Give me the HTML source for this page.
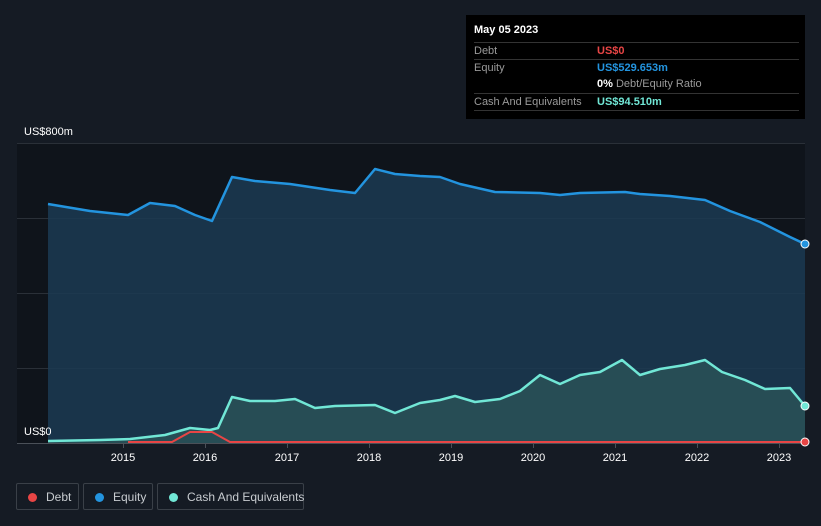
<!DOCTYPE html><html><head><style>
body{margin:0;width:821px;height:526px;background:#151b24;font-family:"Liberation Sans",sans-serif;overflow:hidden;position:relative}
.tt{position:absolute;left:466px;top:15px;width:339px;height:104px;background:#000;color:#fff;font-size:11px}
.tt .r{position:absolute;left:8px;right:6px;border-top:1px solid #333;height:17px;line-height:17px}
.tt .l{color:#9a9a9a}.tt .v{position:absolute;left:123px;font-weight:bold}
.lg{position:absolute;top:483px;height:27px;border:1px solid #3a4048;border-radius:2px;color:#c8ccd0;font-size:12px;line-height:26px;box-sizing:border-box;white-space:nowrap}
.lg i{display:inline-block;width:9px;height:9px;border-radius:50%;margin:0 9px 0 11px;vertical-align:-1px}
.ax{position:absolute;color:#fff;font-size:11px}
</style></head><body>
<div class="tt">
<div style="position:absolute;left:8px;top:9px;font-weight:bold">May 05 2023</div>
<div class="r" style="top:27px"><span class="l">Debt</span><span class="v" style="color:#e84545">US$0</span></div>
<div class="r" style="top:44px"><span class="l">Equity</span><span class="v" style="color:#2394df">US$529.653m</span></div>
<div class="r" style="top:61px;border-top:none"><span class="v" style="color:#fff">0% <span style="color:#9a9a9a;font-weight:normal">Debt/Equity Ratio</span></span></div>
<div class="r" style="top:78px"><span class="l">Cash And Equivalents</span><span class="v" style="color:#71e7d6">US$94.510m</span></div>
<div class="r" style="top:95px;height:0"></div>
</div>
<div class="ax" style="left:24px;top:126px">US$800m</div>
<svg width="821" height="526" style="position:absolute;left:0;top:0" >
<rect x="17" y="143" width="788" height="300" fill="#0f141b"/>
<g stroke="#2a3038" stroke-width="1"><line x1="17" y1="143.5" x2="805" y2="143.5"/><line x1="17" y1="218.5" x2="805" y2="218.5"/><line x1="17" y1="293.5" x2="805" y2="293.5"/><line x1="17" y1="368.5" x2="805" y2="368.5"/></g>
<path d="M48,204 L90,211 L128,215 L150,203 L175,206 L195,215 L212,221 L232,177 L255,181 L290,184 L330,190 L355,193 L375,169 L395,174 L420,176 L440,177 L460,184 L495,192 L540,193 L560,195 L580,193 L625,192 L640,194 L670,196 L705,200 L730,211 L760,222 L790,237 L805,244 L805,443 L48,443Z" fill="#1b3a52" fill-opacity=".85"/>
<path d="M48,441 L100,440 L130,439 L165,435 L190,428 L210,430 L218,428 L232,397 L250,401 L275,401 L295,399 L315,408 L335,406 L375,405 L395,413 L420,403 L440,400 L455,396 L475,402 L500,399 L520,391 L540,375 L560,384 L580,375 L600,372 L622,360 L640,375 L660,369 L685,365 L705,360 L722,372 L745,380 L765,389 L790,388 L805,406 L805,443 L48,443Z" fill="#2a5458" fill-opacity=".8"/>
<path d="M48,204 L90,211 L128,215 L150,203 L175,206 L195,215 L212,221 L232,177 L255,181 L290,184 L330,190 L355,193 L375,169 L395,174 L420,176 L440,177 L460,184 L495,192 L540,193 L560,195 L580,193 L625,192 L640,194 L670,196 L705,200 L730,211 L760,222 L790,237 L805,244" fill="none" stroke="#2394df" stroke-width="2.5" stroke-linejoin="round"/>
<path d="M48,441 L100,440 L130,439 L165,435 L190,428 L210,430 L218,428 L232,397 L250,401 L275,401 L295,399 L315,408 L335,406 L375,405 L395,413 L420,403 L440,400 L455,396 L475,402 L500,399 L520,391 L540,375 L560,384 L580,375 L600,372 L622,360 L640,375 L660,369 L685,365 L705,360 L722,372 L745,380 L765,389 L790,388 L805,406" fill="none" stroke="#71e7d6" stroke-width="2.5" stroke-linejoin="round"/>
<path d="M128,442 L172,442 L190,432 L212,432 L230,442 L805,442" fill="none" stroke="#e84545" stroke-width="2"/>
<line x1="17" y1="443.5" x2="805" y2="443.5" stroke="#4a5058"/>
<g stroke="#4a5058"><line x1="123.5" y1="443" x2="123.5" y2="448"/><line x1="205.5" y1="443" x2="205.5" y2="448"/><line x1="287.5" y1="443" x2="287.5" y2="448"/><line x1="369.5" y1="443" x2="369.5" y2="448"/><line x1="451.5" y1="443" x2="451.5" y2="448"/><line x1="533.5" y1="443" x2="533.5" y2="448"/><line x1="615.5" y1="443" x2="615.5" y2="448"/><line x1="697.5" y1="443" x2="697.5" y2="448"/><line x1="779.5" y1="443" x2="779.5" y2="448"/></g>
<circle cx="805" cy="244" r="4" fill="#2394df" stroke="#fff" stroke-width="1"/>
<circle cx="805" cy="406" r="4" fill="#71e7d6" stroke="#fff" stroke-width="1"/>
<circle cx="805" cy="442" r="4" fill="#e84545" stroke="#fff" stroke-width="1"/>
<g fill="#fff" font-size="11" font-family="Liberation Sans" text-anchor="middle"><text x="123" y="461">2015</text><text x="205" y="461">2016</text><text x="287" y="461">2017</text><text x="369" y="461">2018</text><text x="451" y="461">2019</text><text x="533" y="461">2020</text><text x="615" y="461">2021</text><text x="697" y="461">2022</text><text x="779" y="461">2023</text></g>
<text x="24" y="435" fill="#fff" font-size="11" font-family="Liberation Sans">US$0</text>
</svg>
<div class="lg" style="left:16px;width:63px"><i style="background:#e84545"></i>Debt</div>
<div class="lg" style="left:83px;width:70px"><i style="background:#2394df"></i>Equity</div>
<div class="lg" style="left:157px;width:147px"><i style="background:#71e7d6"></i>Cash And Equivalents</div>
</body></html>
